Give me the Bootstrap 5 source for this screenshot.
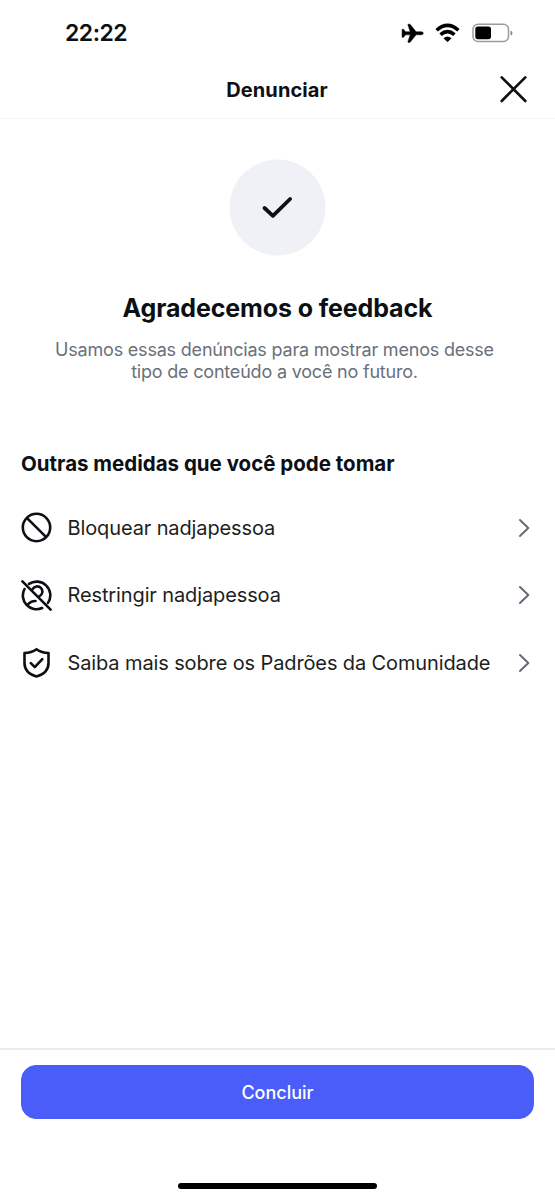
<!DOCTYPE html>
<html lang="pt-BR">
<head>
<meta charset="utf-8">
<meta name="viewport" content="width=device-width, initial-scale=1">
<title>Denunciar</title>
<link href="https://cdn.jsdelivr.net/npm/bootstrap@5.3.0/dist/css/bootstrap.min.css" rel="stylesheet">
<style>
  body { font-family: Inter, "Liberation Sans", sans-serif; color: #0c1014; background: #fff; }
  .screen { height: 1200px; }
  .status { height: 61px; padding: 5px 42px 0 65px; }
  .clock { font-size: 23px; font-weight: 600; letter-spacing: -.5px; line-height: 28px; }
  .wifi { margin: 0 12px 0 11px; }
  .topbar { height: 58px; border-bottom: 1px solid #f3f4f5; padding: 0 28px 0 27px; grid-template-columns: 28px 1fr 28px; }
  .topbar h1 { font-size: 20px; font-weight: 700; letter-spacing: .1px; line-height: 24px; }
  .close-btn { width: 28px; height: 28px; }
  .hero { padding: 40px 26px 0 20px; }
  .tick { width: 97px; height: 97px; margin-left: 209px; }
  .hero h2 { font-size: 25px; font-weight: 700; letter-spacing: -.12px; line-height: 32px; margin: 36px 0 0 6px; }
  .hero p { font-size: 18px; line-height: 22px; letter-spacing: -.2px; color: #6a717b; margin-top: 15px; }
  .actions { padding: 68px 0 0 21px; }
  .actions h3 { font-size: 20.5px; font-weight: 700; line-height: 26px; }
  .action-list { padding-top: 17px; }
  .action { height: 67.5px; padding: 0 24px 0 0; background: transparent; border: 0; color: #1c1e21; font-size: 20px; letter-spacing: -.12px; }
  .action .glyph { width: 31px; height: 31px; margin-right: 15.5px; color: #0c1014; }
  .foot { height: 152px; border-top: 2px solid #ececee; padding: 15px 21px 0; }
  .done { height: 54px; border-radius: 15px; --bs-btn-bg: #4a5df9; --bs-btn-border-color: #4a5df9; --bs-btn-color: #fff; font-size: 18px; font-weight: 500; }
  .home-bar { width: 199px; height: 6px; background: #000; margin-top: 64px; }
</style>
</head>
<body>
<div class="screen d-flex flex-column overflow-hidden">
  <div class="status d-flex align-items-center justify-content-between">
    <span class="clock">22:22</span>
    <div class="d-flex align-items-center">
      <svg width="23" height="22" viewBox="0 0 23 22" stroke="#000" stroke-width=".5"><path d="M22.300 11.300c0 .8-.9 1.500-2.200 1.500h-5L9.300 20c-.2.300-.5.400-.8.400H7.300c-.3 0-.5-.3-.4-.6l2.300-7H4.600l-1.900 2.300c-.2.200-.4.300-.6.300H1.500c-.3 0-.4-.2-.4-.4V7.600c0-.2.100-.4.400-.4h.6c.2 0 .4.100.6.300l1.900 2.300h4.600L6.900 2.800c-.1-.3.100-.6.400-.6h1.200c.3 0 .6.100.8.400l5.800 7.200h5C21.400 9.800 22.300 10.500 22.300 11.300z"/></svg>
      <svg class="wifi" width="25" height="20" viewBox="0 0 25 20"><path d="M1.600 7.200Q12.500-2.500 23.400 7.200M5.500 11.600Q12.500 5.600 19.500 11.600" fill="none" stroke="#000" stroke-width="3.500"/><path d="M8.500 15.200Q12.500 11.700 16.500 15.200L13.200 18.600Q12.500 19.200 11.800 18.600z"/></svg>
      <svg width="41" height="20" viewBox="0 0 41 20"><rect x="1" y="1.200" width="35.500" height="17.300" rx="5" fill="#fff" stroke="#9c9c9c" stroke-width="1.500"/><rect x="3.300" y="3.500" width="15.700" height="12.700" rx="2.600"/><path d="M38.500 7.500Q40.500 8 40.500 10T38.500 12.500z" fill="#8a8a8a"/></svg>
    </div>
  </div>
  <header class="topbar d-grid align-items-center flex-shrink-0">
    <span></span>
    <h1 class="m-0 text-center">Denunciar</h1>
    <button class="close-btn btn p-0 border-0 d-flex" aria-label="Fechar"><svg width="28" height="28" viewBox="0 0 28 28" fill="none" stroke="#0c1014" stroke-width="2.600" stroke-linecap="round"><path d="M2.700 1.400l23.600 23.600M26.300 1.400L2.700 25"/></svg></button>
  </header>
  <main class="flex-grow-1">
    <section class="hero text-center">
      <svg class="tick d-block" viewBox="0 0 97 97"><circle cx="48.500" cy="48.500" r="48" fill="#f0f1f6"/><path d="M35.500 49l8.400 7.800L61.100 40" fill="none" stroke="#0c1014" stroke-width="3.800" stroke-linecap="round" stroke-linejoin="round"/></svg>
      <h2 class="mb-0">Agradecemos o feedback</h2>
      <p class="mb-0">Usamos essas denúncias para mostrar menos desse<br>tipo de conteúdo a você no futuro.</p>
    </section>
    <section class="actions">
      <h3 class="m-0">Outras medidas que você pode tomar</h3>
      <div class="action-list">
        <button class="action d-flex align-items-center w-100 text-start">
          <svg class="glyph" viewBox="0 0 31 31" fill="none" stroke="currentColor" stroke-width="2.600"><circle cx="15.500" cy="15.500" r="13.700"/><path d="M5.800 5.800l19.400 19.400"/></svg>
          <span class="flex-grow-1">Bloquear nadjapessoa</span>
          <svg width="13" height="20" viewBox="0 0 13 20" fill="none" stroke="#656b76" stroke-width="2" stroke-linecap="round" stroke-linejoin="round"><path d="M2 2l8.300 8L2 18"/></svg>
        </button>
        <button class="action d-flex align-items-center w-100 text-start">
          <svg class="glyph" viewBox="0 0 31 31" fill="none" stroke="currentColor" stroke-width="2.600" stroke-linecap="round"><path d="M1.400 1.400l28.200 28.200M8 3.900A13.700 13.700 0 0 1 27 22.900M3.500 9A13.700 13.700 0 0 0 21.200 28M11.600 9.100A5.200 5.200 0 1 1 18.600 16.200M6.500 25.300C8.300 22.200 11 21 14.500 21"/></svg>
          <span class="flex-grow-1">Restringir nadjapessoa</span>
          <svg width="13" height="20" viewBox="0 0 13 20" fill="none" stroke="#656b76" stroke-width="2" stroke-linecap="round" stroke-linejoin="round"><path d="M2 2l8.300 8L2 18"/></svg>
        </button>
        <button class="action d-flex align-items-center w-100 text-start">
          <svg class="glyph" viewBox="0 0 31 31" fill="none" stroke="currentColor" stroke-width="2.600" stroke-linecap="round" stroke-linejoin="round"><path d="M15.500 2.200Q20.500 5.800 27.500 6V16C27.500 23 22.500 27.500 15.500 29.500C8.500 27.500 3.500 23 3.500 16V6Q10.500 5.800 15.500 2.200zM9.800 16.200l4 4 7.500-8"/></svg>
          <span class="flex-grow-1 text-nowrap">Saiba mais sobre os Padrões da Comunidade</span>
          <svg width="13" height="20" viewBox="0 0 13 20" fill="none" stroke="#656b76" stroke-width="2" stroke-linecap="round" stroke-linejoin="round"><path d="M2 2l8.300 8L2 18"/></svg>
        </button>
      </div>
    </section>
  </main>
  <footer class="foot flex-shrink-0">
    <button class="done btn w-100 d-flex align-items-center justify-content-center">Concluir</button>
    <div class="home-bar rounded-pill mx-auto"></div>
  </footer>
</div>
<script src="https://cdn.jsdelivr.net/npm/bootstrap@5.3.0/dist/js/bootstrap.bundle.min.js"></script>
</body>
</html>
